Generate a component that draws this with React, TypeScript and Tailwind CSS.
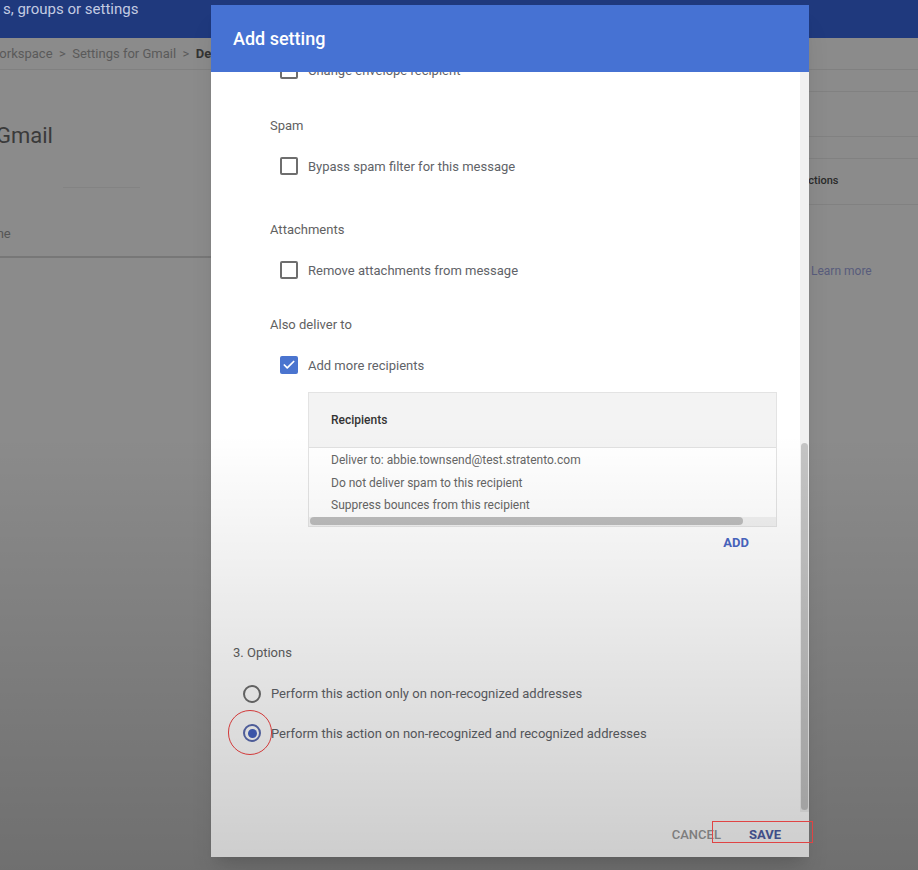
import { Check } from 'lucide-react';

const font = { fontFamily: 'Roboto, "Liberation Sans", sans-serif' };

const Checkbox = ({ checked }: { checked?: boolean }) =>
    checked ? (
        <div className="w-[18px] h-[18px] rounded-[2px] bg-[#4a74cf] flex items-center justify-center shrink-0">
            <Check className="w-[14px] h-[14px] text-white" strokeWidth={3} />
        </div>
    ) : (
        <div className="w-[18px] h-[18px] rounded-[2px] border-2 border-[#6e6e6e] shrink-0" />
    );

const CheckRow = ({ label, checked, className }: { label: string; checked?: boolean; className?: string }) => (
    <div className={`flex items-center gap-[10px] pl-[47px] h-[18px] ${className ?? ''}`}>
        <Checkbox checked={checked} />
        <span className="text-[13px] text-[#5f6368] leading-none">{label}</span>
    </div>
);

const Radio = ({ selected }: { selected?: boolean }) =>
    selected ? (
        <div className="w-[18px] h-[18px] rounded-full border-2 border-[#5a6bb0] flex items-center justify-center shrink-0">
            <div className="w-[9px] h-[9px] rounded-full bg-[#4361c2]" />
        </div>
    ) : (
        <div className="w-[18px] h-[18px] rounded-full border-2 border-[#6e6e6e] shrink-0" />
    );

export default function App() {
    return (
        <div className="relative w-[918px] h-[870px] overflow-hidden bg-neutral-500" style={font}>
            {/* Page behind the dialog (dimmed by the modal) */}
            <div className="flex flex-col h-full bg-[rgb(139,139,139)]">
                <div className="h-[38px] bg-[rgb(31,57,125)] pl-[3px]">
                    <span className="block text-[15px] leading-[18px] text-[#c3cbe2]">s, groups or settings</span>
                </div>
                <div className="h-[32px] border-b border-[#808080] flex items-center">
                    <span className="text-[13px] text-[#5a5a5a] -ml-[12px] whitespace-nowrap">
                        Workspace&nbsp;&nbsp;&gt;&nbsp;&nbsp;Settings for Gmail&nbsp;&nbsp;&gt;&nbsp;&nbsp;<b className="text-[#333]">Default routing</b>
                    </span>
                </div>
                <div className="flex flex-1">
                    <div className="w-[211px] flex flex-col">
                        <span className="mt-[51px] text-[22px] leading-[30px] text-[#3a3a3a] -ml-[4px]">Gmail</span>
                        <div className="mt-[36px] ml-[63px] w-[77px] h-px bg-[#838383]" />
                        <span className="mt-[38px] text-[13px] leading-[16px] text-[#555] -ml-[20px]">None</span>
                        <div className="mt-[14px] h-[2px] bg-[#777777]" />
                    </div>
                    <div className="flex-1" />
                    <div className="w-[109px] flex flex-col">
                        <div className="h-[22px] border-b border-[#818181]" />
                        <div className="h-[45px] border-b border-[#818181]" />
                        <div className="h-[22px] border-b border-[#818181]" />
                        <div className="h-[46px] border-b border-[#818181] flex items-center -ml-[8px]">
                            <span className="text-[11px] font-medium text-[#2a2a2a]">Actions</span>
                        </div>
                        <span className="mt-[57px] ml-[2px] text-[12px] text-[#585c7c]">Learn more</span>
                    </div>
                </div>
            </div>

            {/* Dialog */}
            <div className="absolute left-[211px] top-[5px] w-[598px] h-[852px] bg-white shadow-xl flex flex-col">
                <div className="h-[67px] bg-[#4672d3] flex items-center pl-[22px] shrink-0">
                    <span className="text-[18px] font-medium text-white">Add setting</span>
                </div>
                <div className="flex h-[740px] overflow-hidden">
                    <div className="flex-1 flex flex-col pl-[22px] overflow-hidden">
                        <CheckRow label="Change envelope recipient" className="-mt-[11px]" />
                        <span className="mt-[39px] pl-[37px] text-[13px] leading-[16px] text-[#616161]">Spam</span>
                        <CheckRow label="Bypass spam filter for this message" className="mt-[23px]" />
                        <span className="mt-[47px] pl-[37px] text-[13px] leading-[16px] text-[#616161]">Attachments</span>
                        <CheckRow label="Remove attachments from message" className="mt-[23px]" />
                        <span className="mt-[38px] pl-[37px] text-[13px] leading-[16px] text-[#616161]">Also deliver to</span>
                        <CheckRow label="Add more recipients" checked className="mt-[23px]" />

                        <div className="mt-[18px] ml-[75px] w-[469px] border border-[#e3e3e3] flex flex-col">
                            <div className="h-[55px] bg-[#f3f3f3] border-b border-[#e0e0e0] flex items-center pl-[22px]">
                                <span className="text-[12px] font-medium text-[#333]">Recipients</span>
                            </div>
                            <div className="flex flex-col pl-[22px] pt-[1px] text-[12px] text-[#666] leading-[22.5px]">
                                <span>Deliver to: abbie.townsend@test.stratento.com</span>
                                <span>Do not deliver spam to this recipient</span>
                                <span>Suppress bounces from this recipient</span>
                            </div>
                            <div className="h-[9px] bg-[#f1f1f1] px-[1px] flex items-center">
                                <div className="w-[433px] h-[8px] rounded-full bg-[#bdbdbd]" />
                            </div>
                        </div>
                        <div className="mt-[6px] w-[516px] flex justify-end">
                            <span className="text-[13px] font-bold text-[#4a67c4]">ADD</span>
                        </div>

                        <span className="mt-[93px] text-[13px] leading-[16px] text-[#616161]">3. Options</span>
                        <div className="mt-[23px] flex items-center gap-[10px] pl-[10px]">
                            <Radio />
                            <span className="text-[13px] text-[#5f6368]">Perform this action only on non-recognized addresses</span>
                        </div>
                        <div className="mt-[20px] flex items-center gap-[10px] pl-[10px]">
                            <Radio selected />
                            <span className="text-[13px] text-[#5f6368]">Perform this action on non-recognized and recognized addresses</span>
                        </div>
                    </div>
                    <div className="w-[9px] bg-[#f1f1f1] flex flex-col">
                        <div className="mt-[371px] mx-[1px] h-[367px] rounded-full bg-[#c4c4c4]" />
                    </div>
                </div>
                <div className="flex-1 flex items-center justify-end gap-[28px] pr-[28px] pt-[1px]">
                    <span className="text-[13px] font-medium text-[#9a9a9a]">CANCEL</span>
                    <span className="text-[13px] font-bold text-[#4e5fa6]">SAVE</span>
                </div>
            </div>

            {/* Video vignette */}
            <div className="absolute inset-0 pointer-events-none bg-[linear-gradient(to_bottom,rgba(0,0,0,0)_50%,rgba(0,0,0,0.2))]" />

            {/* Red annotations */}
            <div className="absolute left-[228px] top-[710px] w-[44px] h-[45px] rounded-full border border-[#d23a3a]" />
            <div className="absolute left-[712px] top-[821px] w-[101px] h-[22px] border-[1.5px] border-[#e04444]" />
        </div>
    );
}
